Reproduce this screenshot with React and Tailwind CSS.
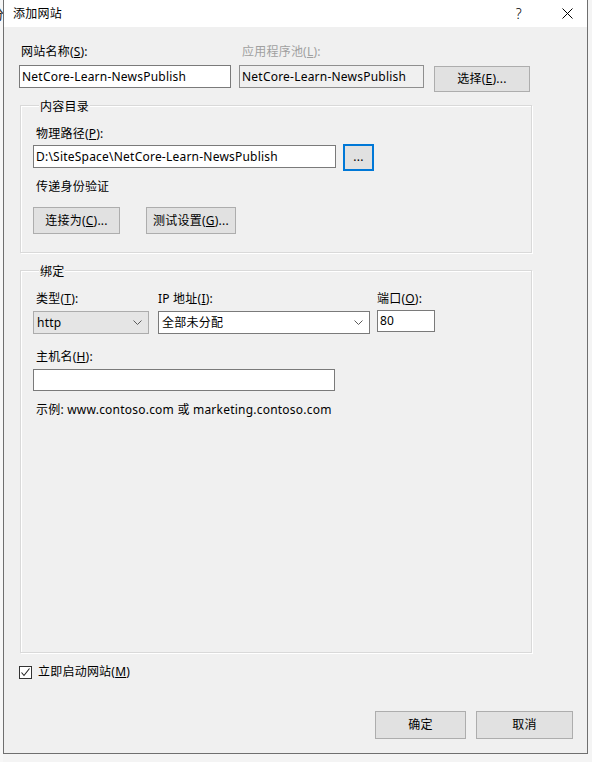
import React from 'react';

// "添加网站" (IIS Add Website) dialog, Windows 10 styling.
const FONT = "font-['Noto_Sans','Noto_Sans_CJK_SC',sans-serif]";

function Chevron() {
  return (
    <svg width="9" height="5" viewBox="0 0 9 5" className="shrink-0">
      <path d="M0.5 0.5 L4.5 4.5 L8.5 0.5" fill="none" stroke="#5a5a5a" strokeWidth="1" />
    </svg>
  );
}

function Btn({ children, className = '' }) {
  return (
    <div className={`flex items-center justify-center bg-[#e1e1e1] border border-[#adadad] text-black ${className}`}>
      {children}
    </div>
  );
}

function TextBox({ value, className = '' }) {
  return (
    <div className={`flex items-center bg-white border border-[#7a7a7a] pl-[2px] whitespace-nowrap overflow-hidden ${className}`}>
      {value}
    </div>
  );
}

// Group box with its caption sitting on the top edge.
function Group({ title, className = '', children }) {
  return (
    <div className={`ml-[1px] w-[512px] border border-[#d9d9d9] shadow-[inset_1px_1px_0_#ffffff,1px_1px_0_#ffffff] ${className}`}>
      <div className="-mt-[7px] ml-[6px] w-fit bg-[#f0f0f0] px-[1px] leading-[16px]">{title}</div>
      {children}
    </div>
  );
}

export default function App() {
  return (
    <div className={`${FONT} text-[12px] leading-[16px] tracking-[0.22px] text-black w-[592px] h-[762px] bg-[#f4f4f4] flex overflow-hidden`}>
      {/* sliver of the window behind */}
      <div className="w-[3px] shrink-0 overflow-hidden bg-[#f7f7f7]">
        <div className="mt-[6px] -ml-[9px] text-[13px] text-[#222]">分</div>
      </div>

      <div className="w-[585px] h-[754px] shrink-0 flex flex-col border-l border-r border-b border-[#6f6f6f]">
        {/* title bar */}
        <div className="h-[27px] bg-white flex items-center pl-[9px] pr-[14px]">
          <span className="text-[12px]">添加网站</span>
          <span className="ml-auto mr-[40px] text-[14px] font-light">?</span>
          <svg width="11" height="11" viewBox="0 0 11 11">
            <path d="M0.5 0.5 L10.5 10.5 M10.5 0.5 L0.5 10.5" stroke="#000" strokeWidth="1" />
          </svg>
        </div>

        <div className="flex-1 bg-[#f0f0f0] pl-[15px] pr-[14px] pt-[17px] flex flex-col">
          {/* site name / app pool */}
          <div className="flex items-start">
            <div className="w-[212px]">
              <div className="pl-[2px]">
                网站名称(<span className="underline">S</span>):
              </div>
              <TextBox value="NetCore-Learn-NewsPublish" className="mt-[5px] h-[23px] w-[212px]" />
            </div>
            <div className="ml-[8px] w-[185px]">
              <div className="pl-[3px] text-[#a0a0a0]">
                应用程序池(<span className="underline">L</span>):
              </div>
              <div className="mt-[5px] h-[23px] flex items-center bg-[#f0f0f0] border border-[#8f8f8f] pl-[2px] whitespace-nowrap">
                NetCore-Learn-NewsPublish
              </div>
            </div>
            <Btn className="ml-[10px] mt-[22px] w-[96px] h-[26px]">
              选择(<span className="underline">E</span>)...
            </Btn>
          </div>

          {/* content directory */}
          <Group title="内容目录" className="mt-[13px] pl-[12px] pb-[18px]">
            <div className="mt-[11px] ml-[3px]">
              物理路径(<span className="underline">P</span>):
            </div>
            <div className="mt-[2px] flex items-start">
              <TextBox value="D:\SiteSpace\NetCore-Learn-NewsPublish" className="mt-[1px] h-[23px] w-[303px]" />
              <div className="ml-[7px] w-[31px] h-[27px] border-2 border-[#0078d7] bg-[#e1e1e1] flex items-center justify-center leading-none pb-[2px]">
                ...
              </div>
            </div>
            <div className="mt-[8px] ml-[3px]">传递身份验证</div>
            <div className="mt-[12px] flex">
              <Btn className="w-[87px] h-[27px]">
                连接为(<span className="underline">C</span>)...
              </Btn>
              <Btn className="ml-[26px] w-[90px] h-[27px]">
                测试设置(<span className="underline">G</span>)...
              </Btn>
            </div>
          </Group>

          {/* bindings */}
          <Group title="绑定" className="mt-[17px] h-[383px] pl-[12px]">
            <div className="mt-[11px] flex items-start">
              <div className="w-[116px]">
                <div className="ml-[3px]">
                  类型(<span className="underline">T</span>):
                </div>
                <div className="mt-[4px] h-[23px] flex items-center bg-[#e5e5e5] border border-[#acacac] pl-[3px] pr-[6px]">
                  <span>http</span>
                  <span className="ml-auto"><Chevron /></span>
                </div>
              </div>
              <div className="ml-[9px] w-[212px]">
                <div>
                  IP 地址(<span className="underline">I</span>):
                </div>
                <div className="mt-[4px] h-[23px] flex items-center bg-white border border-[#7a7a7a] pl-[3px] pr-[6px]">
                  <span>全部未分配</span>
                  <span className="ml-auto"><Chevron /></span>
                </div>
              </div>
              <div className="ml-[7px] w-[58px]">
                <div>
                  端口(<span className="underline">O</span>):
                </div>
                <TextBox value="80" className="mt-[3px] h-[22px] w-[58px]" />
              </div>
            </div>
            <div className="mt-[15px] ml-[3px]">
              主机名(<span className="underline">H</span>):
            </div>
            <TextBox value="" className="mt-[4px] h-[22px] w-[302px]" />
            <div className="mt-[11px] ml-[3px]">示例: www.contoso.com 或 marketing.contoso.com</div>
          </Group>

          {/* start immediately */}
          <div className="mt-[11px] flex items-center">
            <div className="w-[13px] h-[13px] border border-[#333333] bg-white flex items-center justify-center">
              <svg width="11" height="11" viewBox="0 0 11 11">
                <path d="M1.5 5.5 L4 8.5 L9.5 1.5" fill="none" stroke="#222" strokeWidth="1.1" />
              </svg>
            </div>
            <span className="ml-[6px]">
              立即启动网站(<span className="underline">M</span>)
            </span>
          </div>

          {/* dialog buttons */}
          <div className="mt-[31px] flex justify-end">
            <Btn className="w-[91px] h-[28px]">确定</Btn>
            <Btn className="ml-[10px] w-[97px] h-[28px]">取消</Btn>
          </div>
        </div>
      </div>
    </div>
  );
}
